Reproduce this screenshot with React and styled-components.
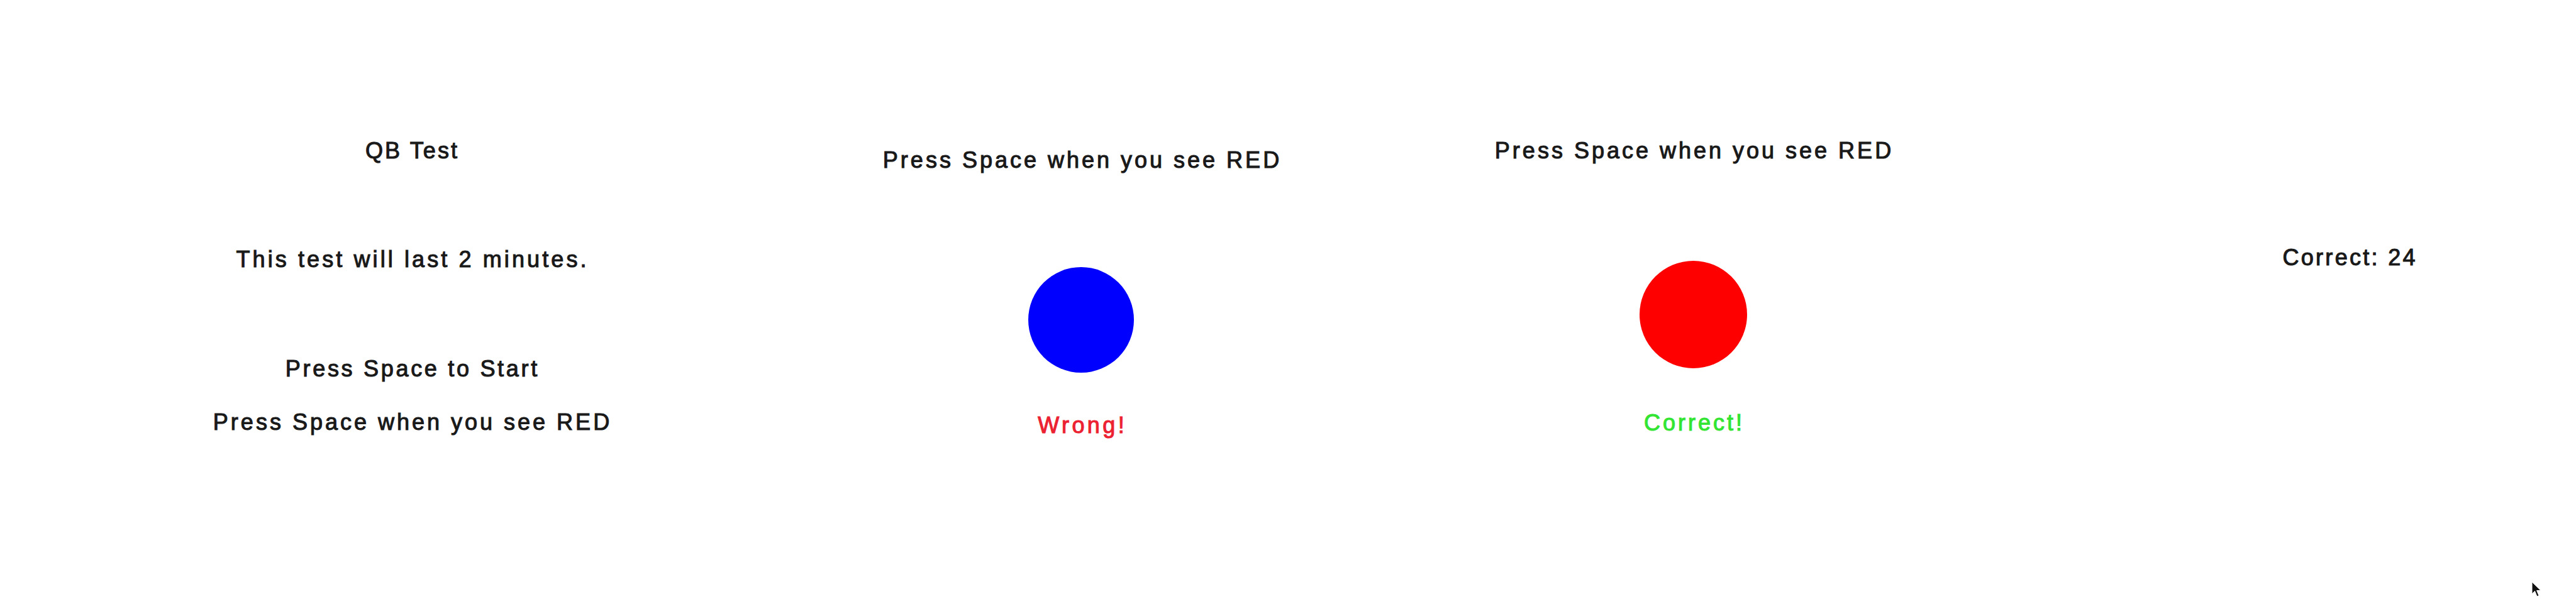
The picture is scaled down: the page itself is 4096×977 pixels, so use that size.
import styled, { createGlobalStyle } from "styled-components";

const GlobalStyle = createGlobalStyle`
    html, body {
        margin: 0;
        padding: 0;
        background: #ffffff;
    }
    #root {
        min-height: 100vh;
    }
`

const Screen = styled.div`
    position: relative;
    width: 4096px;
    height: 977px;
    background-color: #ffffff;
    overflow: hidden;
    display: flex;
    flex-direction: row;
    align-items: flex-start;
    font-family: "Liberation Sans", Arial, Helvetica, sans-serif;
`

const Frame = styled.div`
    width: 700px;
    flex: 0 0 700px;
    margin-left: ${(p) => p.$left}px;
    padding-top: ${(p) => p.$top}px;
    display: flex;
    flex-direction: column;
    align-items: center;
`

const Line = styled.div`
    margin-top: ${(p) => p.$mt || 0}px;
    padding-left: ${(p) => p.$ls ?? 4}px;
    font-size: 36px;
    line-height: 36px;
    letter-spacing: ${(p) => p.$ls ?? 4}px;
    color: ${(p) => p.$color || "#191919"};
    -webkit-text-stroke: 1.1px ${(p) => p.$color || "#191919"};
    white-space: nowrap;
    text-align: center;
`

const Dot = styled.div`
    margin-top: ${(p) => p.$mt}px;
    width: ${(p) => p.$size}px;
    height: ${(p) => p.$size}px;
    border-radius: 50%;
    background-color: ${(p) => p.$color};
`

const Pointer = styled.svg`
    position: absolute;
    left: 4025px;
    top: 925px;
    width: 17px;
    height: 26px;
`

const App = () => {
    return (
        <>
            <GlobalStyle />
            <Screen>
                {/* Intro frame */}
                <Frame $left={304} $top={222}>
                    <Line $ls={3.1}>QB Test</Line>
                    <Line $mt={137} $ls={4.1}>This test will last 2 minutes.</Line>
                    <Line $mt={138} $ls={3.7}>Press Space to Start</Line>
                    <Line $mt={49} $ls={4.0}>Press Space when you see RED</Line>
                </Frame>

                {/* Blue stimulus -> wrong */}
                <Frame $left={365} $top={237}>
                    <Line $ls={4.0}>Press Space when you see RED</Line>
                    <Dot $mt={152} $size={168} $color="#0000ff" />
                    <Line $mt={66} $ls={4.4} $color="#ec2232">Wrong!</Line>
                </Frame>

                {/* Red stimulus -> correct */}
                <Frame $left={273} $top={222}>
                    <Line $ls={4.0}>Press Space when you see RED</Line>
                    <Dot $mt={157} $size={171} $color="#ff0000" />
                    <Line $mt={69} $ls={4.0} $color="#33e533">Correct!</Line>
                </Frame>

                {/* Score */}
                <Frame $left={343} $top={392}>
                    <Line $ls={3.3}>Correct: 24</Line>
                </Frame>

                <Pointer viewBox="0 0 17 26">
                    <path d="M1 1 L1 20 L5.5 15.5 L9 24 L12 22.8 L8.6 14.6 L15 14.6 Z" fill="#111" stroke="#fff" strokeWidth="1" />
                </Pointer>
            </Screen>
        </>
    );
};

export default App;
